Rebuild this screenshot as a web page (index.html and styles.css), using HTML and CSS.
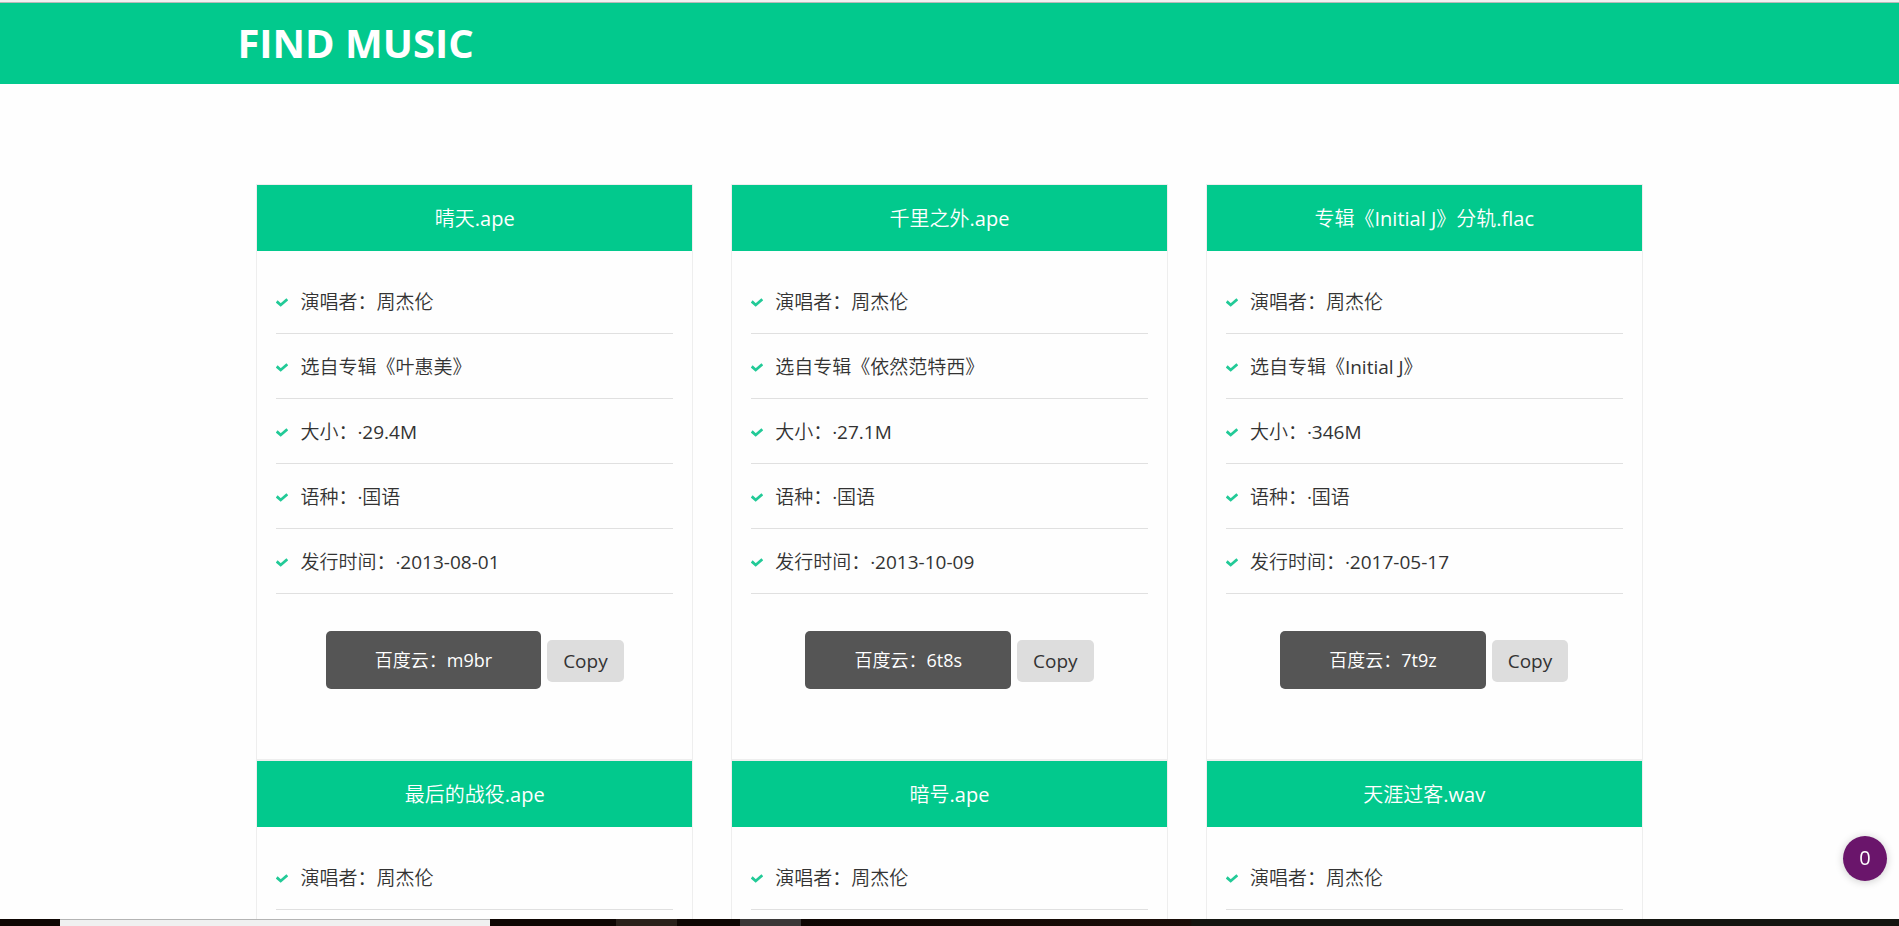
FILE: index.html
```html
<!DOCTYPE html>
<html lang="zh-CN">
<head>
<meta charset="utf-8">
<title>FIND MUSIC</title>
<link rel="stylesheet" href="styles.css">
</head>
<body>
<svg class="defs" aria-hidden="true"><symbol id="check" viewBox="0 0 12 9"><path d="M.7 3.4 4.7 7 11.3 1.3" fill="none" stroke="#22ca97" stroke-width="2.8"/></symbol></svg>
<div class="window-edge"></div>
<header class="site-header"><h1 class="logo">FIND MUSIC</h1></header>
<main class="content">
  <div class="cards">
    <article class="card">
      <h2 class="card-title">晴天.ape</h2>
      <ul class="facts">
        <li><svg class="check"><use href="#check"/></svg>演唱者：周杰伦</li>
        <li><svg class="check"><use href="#check"/></svg>选自专辑《叶惠美》</li>
        <li><svg class="check"><use href="#check"/></svg>大小：·29.4M</li>
        <li><svg class="check"><use href="#check"/></svg>语种：·国语</li>
        <li><svg class="check"><use href="#check"/></svg>发行时间：·2013-08-01</li>
      </ul>
      <div class="actions"><a class="download" href="#">百度云：m9br</a><button class="copy" type="button">Copy</button></div>
    </article>
    <article class="card">
      <h2 class="card-title">千里之外.ape</h2>
      <ul class="facts">
        <li><svg class="check"><use href="#check"/></svg>演唱者：周杰伦</li>
        <li><svg class="check"><use href="#check"/></svg>选自专辑《依然范特西》</li>
        <li><svg class="check"><use href="#check"/></svg>大小：·27.1M</li>
        <li><svg class="check"><use href="#check"/></svg>语种：·国语</li>
        <li><svg class="check"><use href="#check"/></svg>发行时间：·2013-10-09</li>
      </ul>
      <div class="actions"><a class="download" href="#">百度云：6t8s</a><button class="copy" type="button">Copy</button></div>
    </article>
    <article class="card">
      <h2 class="card-title">专辑《Initial J》分轨.flac</h2>
      <ul class="facts">
        <li><svg class="check"><use href="#check"/></svg>演唱者：周杰伦</li>
        <li><svg class="check"><use href="#check"/></svg>选自专辑《Initial J》</li>
        <li><svg class="check"><use href="#check"/></svg>大小：·346M</li>
        <li><svg class="check"><use href="#check"/></svg>语种：·国语</li>
        <li><svg class="check"><use href="#check"/></svg>发行时间：·2017-05-17</li>
      </ul>
      <div class="actions"><a class="download" href="#">百度云：7t9z</a><button class="copy" type="button">Copy</button></div>
    </article>
    <article class="card">
      <h2 class="card-title">最后的战役.ape</h2>
      <ul class="facts">
        <li><svg class="check"><use href="#check"/></svg>演唱者：周杰伦</li>
      </ul>
    </article>
    <article class="card">
      <h2 class="card-title">暗号.ape</h2>
      <ul class="facts">
        <li><svg class="check"><use href="#check"/></svg>演唱者：周杰伦</li>
      </ul>
    </article>
    <article class="card">
      <h2 class="card-title">天涯过客.wav</h2>
      <ul class="facts">
        <li><svg class="check"><use href="#check"/></svg>演唱者：周杰伦</li>
      </ul>
    </article>
  </div>
</main>
<footer class="taskbar"><div class="taskbar-search"></div></footer>
<button class="counter" type="button">0</button>
</body>
</html>
```

FILE: styles.css
```css
* {
  box-sizing: border-box;
}

body {
  margin: 0;
  height: 100vh;
  display: flex;
  flex-direction: column;
  overflow: hidden;
  background: #fefefe;
  color: #333;
  font-family: "Open Sans", "Noto Sans CJK SC DemiLight", "Noto Sans CJK SC Light", "Noto Sans CJK SC", sans-serif;
  font-size: 19px;
  text-spacing-trim: space-all;
}

.defs {
  position: absolute;
  width: 0;
  height: 0;
}

.window-edge {
  flex: none;
  height: 3px;
  background: #f0f0f0;
  border-bottom: 1px solid #b9b9b9;
}

.site-header {
  flex: none;
  padding: 13px 0 15px;
  background: #02c98d;
}

.logo {
  width: 75%;
  margin: 0 auto;
  color: #fff;
  font-size: 40px;
  line-height: 53px;
  font-weight: 700;
}

.content {
  flex: 1;
  min-height: 0;
  overflow: hidden;
  padding-top: 100px;
}

.cards {
  width: 75%;
  margin: 0 auto;
  padding: 0 19px;
  display: grid;
  grid-template-columns: repeat(3, 1fr);
  column-gap: 38px;
}

.card {
  border: 1px solid #eee;
  padding-bottom: 70px;
}

.card-title {
  margin: 0;
  padding: 19px 0 17px;
  background: #02c98d;
  color: #fff;
  font-size: 20px;
  line-height: 30px;
  font-weight: 500;
  text-align: center;
}

.facts {
  list-style: none;
  margin: 0;
  padding: 18px 19px 0;
}

.facts li {
  display: flex;
  align-items: center;
  gap: 12px;
  padding: 17px 0 15px;
  border-bottom: 1px solid #e0e0e0;
  line-height: 32px;
}

.check {
  flex: none;
  width: 12px;
  height: 9px;
}

.actions {
  display: flex;
  justify-content: center;
  align-items: center;
  gap: 6px;
  padding-top: 37px;
}

.download {
  padding: 15px 49px;
  border-radius: 5px;
  background: #555;
  color: #fff;
  font-size: 18px;
  line-height: 28px;
  text-decoration: none;
}

.copy {
  margin: 2px 0 0;
  padding: 8px 16px;
  border: 0;
  border-radius: 5px;
  background: #ddd;
  color: #333;
  font: inherit;
  line-height: 26px;
}

.taskbar {
  flex: none;
  height: 7px;
  padding-left: 60px;
  background: linear-gradient(90deg, #0e0603 616px, #2a211b 616px 677px, #0e0603 677px 740px, #3b3838 740px 801px, #0e0603 801px, #1a0d08 1190px, #141510 1192px);
}

.taskbar-search {
  width: 430px;
  height: 100%;
  background: #f0f0f0;
  border-top: 1px solid #b4b4b4;
}

.counter {
  position: fixed;
  right: 12px;
  bottom: 45px;
  width: 44px;
  height: 45px;
  padding: 0 0 3px;
  border: 0;
  border-radius: 50%;
  background: #6a156b;
  color: #fff;
  font: inherit;
  font-size: 20px;
  box-shadow: 0 1px 8px rgba(0, 0, 0, 0.2);
}
```
